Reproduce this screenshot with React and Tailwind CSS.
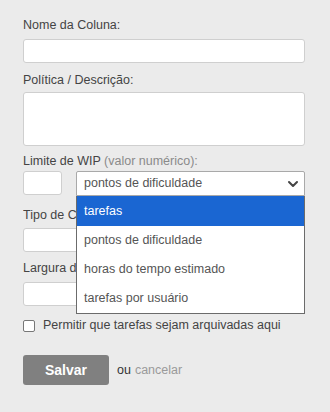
import React from "react";

export default function App() {
  const label = "block text-[12.5px] leading-[15px] text-[#444]";
  const clipped = "block w-[53px] overflow-hidden whitespace-nowrap text-[12.5px] leading-[15px] text-[#444]";
  const input = "block w-[282px] h-[24px] bg-white border border-[#cfcfcf] rounded-[3px]";
  return (
    <div
      className="w-[330px] h-[412px] bg-[#ebebeb] pl-[23px] pt-[18px] overflow-hidden"
      style={{ fontFamily: '"Liberation Sans", Arial, sans-serif' }}
    >
      <label className={label}>Nome da Coluna:</label>
      <div className={`${input} mt-[6px]`} />

      <label className={`${label} mt-[10px]`}>Política / Descrição:</label>
      <div className="mt-[4px] w-[282px] h-[54px] bg-white border border-[#cfcfcf] rounded-[3px]" />

      <label className={`${label} mt-[8px]`}>
        Limite de WIP <span className="text-[#8a8a8a]">(valor numérico):</span>
      </label>
      <div className="mt-[2px] flex items-start">
        <div className="w-[39px] h-[24px] bg-white border border-[#cfcfcf] rounded-[3px]" />
        <div className="relative ml-[14px] w-[229px]">
          <div className="h-[25px] bg-white border border-[#a9a9a9] rounded-t-[2px] flex items-center justify-between pl-[7px] pr-[5px] text-[12.5px] text-[#555]">
            <span>pontos de dificuldade</span>
            <svg width="12" height="12" viewBox="0 0 12 12" fill="none">
              <path d="M2 4 L6 8 L10 4" stroke="#444" strokeWidth="2" strokeLinecap="round" strokeLinejoin="round" />
            </svg>
          </div>
          <div className="absolute left-0 top-[25px] w-[229px] bg-white border border-[#6b6b6b] border-t-0 z-10 text-[12.5px]">
            <div className="h-[30px] bg-[#1a66d2] text-white flex items-center pl-[7px]">tarefas</div>
            <div className="h-[29px] text-[#555] flex items-center pl-[7px]">pontos de dificuldade</div>
            <div className="h-[29px] text-[#555] flex items-center pl-[7px]">horas do tempo estimado</div>
            <div className="h-[29px] text-[#555] flex items-center pl-[7px]">tarefas por usuário</div>
          </div>
        </div>
      </div>

      <label className={`${clipped} mt-[12px]`}>Tipo de Cartão:</label>
      <div className={`${input} mt-[5px]`} />

      <label className={`${clipped} mt-[9px]`}>Largura da Coluna:</label>
      <div className={`${input} mt-[6px]`} />

      <div className="mt-[12px] flex items-center h-[15px]">
        <div className="w-[12px] h-[12px] bg-white border border-[#777] rounded-[2px]" />
        <span className="ml-[8px] text-[12.5px] text-[#444]">Permitir que tarefas sejam arquivadas aqui</span>
      </div>

      <div className="mt-[22px] flex items-center">
        <div className="w-[86px] h-[30px] bg-[#808080] rounded-[3px] flex items-center justify-center text-white font-bold text-[14px]">
          Salvar
        </div>
        <span className="ml-[8px] text-[12.5px] text-[#333]">ou</span>
        <span className="ml-[4px] text-[12.5px] text-[#9a9a9a]">cancelar</span>
      </div>
    </div>
  );
}
